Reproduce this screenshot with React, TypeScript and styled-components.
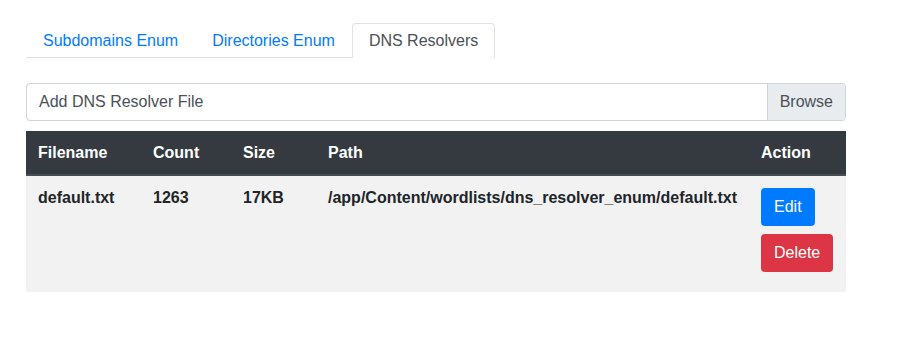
import styled, { createGlobalStyle } from "styled-components";

const GlobalStyle = createGlobalStyle`
  body {
    margin: 0;
    background: #ffffff;
    font-family: "Liberation Sans", Arial, sans-serif;
    font-size: 16px;
    color: #212529;
  }
`;

const Page = styled.div`
  padding: 23px 26px;
  width: 820px;
`;

const Tabs = styled.ul`
  display: inline-flex;
  list-style: none;
  margin: 0 0 25px;
  padding: 0;
  border-bottom: 1px solid #dee2e6;
`;

const Tab = styled.li<{ $active?: boolean }>`
  margin-bottom: -1px;
  padding: 7px 16px;
  line-height: 19px;
  border: 1px solid ${({ $active }) => ($active ? "#dee2e6" : "transparent")};
  border-bottom-color: ${({ $active }) => ($active ? "#ffffff" : "transparent")};
  border-radius: 4px 4px 0 0;
  background: ${({ $active }) => ($active ? "#ffffff" : "transparent")};
  color: ${({ $active }) => ($active ? "#495057" : "#007bff")};
  cursor: pointer;
`;

const FileInput = styled.label`
  display: flex;
  height: 38px;
  box-sizing: border-box;
  border: 1px solid #ced4da;
  border-radius: 4px;
  color: #495057;
  overflow: hidden;
  margin-bottom: 10px;

  .file_label {
    flex: 1;
    display: flex;
    align-items: center;
    padding: 0 12px;
  }
  .file_browse {
    display: flex;
    align-items: center;
    padding: 0 12px;
    background: #e9ecef;
    border-left: 1px solid #ced4da;
  }
`;

const Table = styled.table`
  width: 820px;
  border-collapse: collapse;
  table-layout: fixed;

  th,
  td {
    text-align: left;
    vertical-align: top;
    padding: 12px;
    line-height: 19px;
    font-weight: bold;
  }
  th:nth-child(1) {
    width: 91px;
  }
  th:nth-child(2) {
    width: 66px;
  }
  th:nth-child(3) {
    width: 61px;
  }
  th:nth-child(4) {
    width: 409px;
  }
  thead th {
    background: #343a40;
    color: #ffffff;
    border-bottom: 2px solid #454d55;
  }
  tbody tr:nth-child(odd) td {
    background: #f2f2f2;
  }
`;

const ActionButton = styled.button<{ $variant: "primary" | "danger" }>`
  display: block;
  height: 38px;
  padding: 0 13px;
  margin-bottom: 8px;
  border: none;
  border-radius: 4px;
  font-family: inherit;
  font-size: 16px;
  color: #ffffff;
  background: ${({ $variant }) => ($variant === "primary" ? "#007bff" : "#dc3545")};
  cursor: pointer;
`;

const resolvers = [
  {
    filename: "default.txt",
    count: 1263,
    size: "17KB",
    path: "/app/Content/wordlists/dns_resolver_enum/default.txt",
  },
];

const App = () => {
  return (
    <>
      <GlobalStyle />
      <Page>
        <Tabs>
          <Tab>Subdomains Enum</Tab>
          <Tab>Directories Enum</Tab>
          <Tab $active>DNS Resolvers</Tab>
        </Tabs>
        <FileInput>
          <span className="file_label">Add DNS Resolver File</span>
          <span className="file_browse">Browse</span>
        </FileInput>
        <Table>
          <thead>
            <tr>
              <th>Filename</th>
              <th>Count</th>
              <th>Size</th>
              <th>Path</th>
              <th>Action</th>
            </tr>
          </thead>
          <tbody>
            {resolvers.map((r) => (
              <tr key={r.filename}>
                <td>{r.filename}</td>
                <td>{r.count}</td>
                <td>{r.size}</td>
                <td>{r.path}</td>
                <td>
                  <ActionButton $variant="primary">Edit</ActionButton>
                  <ActionButton $variant="danger">Delete</ActionButton>
                </td>
              </tr>
            ))}
          </tbody>
        </Table>
      </Page>
    </>
  );
};

export default App;
